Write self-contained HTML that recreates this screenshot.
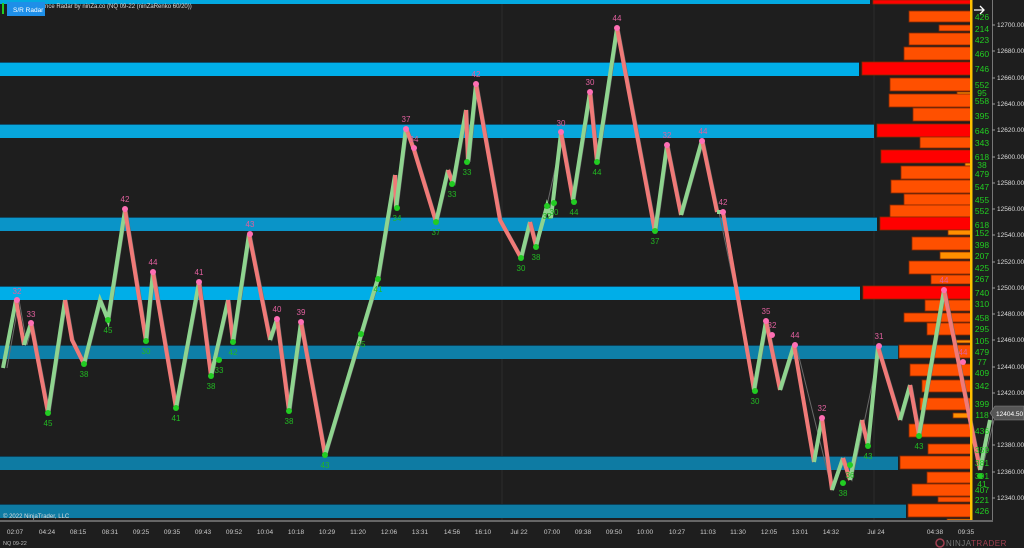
<!DOCTYPE html>
<html><head><meta charset="utf-8"><style>
html,body{margin:0;padding:0;background:#1e1e1e;width:1024px;height:548px;overflow:hidden;font-family:"Liberation Sans",sans-serif}
svg text{font-family:"Liberation Sans",sans-serif}
</style></head><body>
<svg width="1024" height="548" xmlns="http://www.w3.org/2000/svg">
<rect width="1024" height="548" fill="#1e1e1e"/>
<line x1="502" y1="0" x2="502" y2="520" stroke="#2c2c2c"/>
<line x1="874" y1="0" x2="874" y2="520" stroke="#2c2c2c"/>
<g>
<rect x="0" y="0" width="870" height="4" fill="#03a9e0"/>
<rect x="0" y="62" width="859" height="14" fill="#00aee8"/><rect x="0" y="62" width="859" height="1" fill="#0c5070"/>
<rect x="0" y="124" width="874" height="14" fill="#07a6dc"/><rect x="0" y="124" width="874" height="1" fill="#0c5070"/>
<rect x="0" y="217" width="877" height="14" fill="#0a94c8"/><rect x="0" y="217" width="877" height="1" fill="#0c4a66"/>
<rect x="0" y="286" width="860" height="14" fill="#00aee8"/><rect x="0" y="286" width="860" height="1" fill="#0c5070"/>
<rect x="0" y="345" width="898" height="14" fill="#0e7fa8"/><rect x="0" y="345" width="898" height="1" fill="#0c4058"/>
<rect x="0" y="456" width="898" height="14" fill="#0e7ba3"/><rect x="0" y="456" width="898" height="1" fill="#0c4058"/>
<rect x="0" y="504" width="906" height="14" fill="#0e7ba3"/><rect x="0" y="504" width="906" height="1" fill="#0c4058"/>
</g>
<g fill="#ff5000" stroke="#8a2a00" stroke-width="0.8">
<rect x="873" y="0" width="98" height="4" fill="#ff0000"/>
<rect x="909" y="11" width="62" height="11"/>
<rect x="939" y="25" width="32" height="6"/>
<rect x="909" y="33" width="62" height="12"/>
<rect x="904" y="47" width="67" height="13"/>
<rect x="862" y="62" width="109" height="13" fill="#ff0000"/>
<rect x="890" y="78" width="81" height="13"/>
<rect x="957" y="92" width="14" height="3" fill="#ff9000"/>
<rect x="889" y="94" width="82" height="13"/>
<rect x="913" y="108" width="58" height="13"/>
<rect x="877" y="124" width="94" height="13" fill="#ff0000"/>
<rect x="920" y="137" width="51" height="11"/>
<rect x="881" y="150" width="90" height="13" fill="#ff0000"/>
<rect x="965" y="163" width="6" height="3" fill="#ff9000"/>
<rect x="901" y="166" width="70" height="13"/>
<rect x="891" y="180" width="80" height="13"/>
<rect x="904" y="194" width="67" height="11"/>
<rect x="890" y="205" width="81" height="12"/>
<rect x="880" y="217" width="91" height="13" fill="#ff0000"/>
<rect x="948" y="230" width="23" height="5" fill="#ff9000"/>
<rect x="912" y="237" width="59" height="13"/>
<rect x="940" y="252" width="31" height="7" fill="#ff9000"/>
<rect x="909" y="261" width="62" height="13"/>
<rect x="931" y="275" width="40" height="9"/>
<rect x="863" y="286" width="108" height="13" fill="#ff0000"/>
<rect x="925" y="300" width="46" height="11"/>
<rect x="904" y="313" width="67" height="9"/>
<rect x="927" y="323" width="44" height="12"/>
<rect x="955" y="340" width="16" height="3" fill="#ff9000"/>
<rect x="899" y="345" width="72" height="13"/>
<rect x="910" y="364" width="61" height="12"/>
<rect x="922" y="380" width="49" height="12"/>
<rect x="920" y="398" width="51" height="12"/>
<rect x="953" y="413" width="18" height="5" fill="#ff9000"/>
<rect x="909" y="424" width="62" height="13"/>
<rect x="928" y="444" width="43" height="10"/>
<rect x="900" y="456" width="71" height="13"/>
<rect x="927" y="472" width="44" height="11"/>
<rect x="912" y="484" width="59" height="12"/>
<rect x="938" y="497" width="33" height="5"/>
<rect x="908" y="504" width="63" height="13"/>
<rect x="947" y="519" width="24" height="2" fill="#ff9000"/>
</g>
<g fill="none" stroke-width="4" stroke-linejoin="miter">
<polyline stroke="#6a6a6a" stroke-width="1" points="7,368 19,300 27,345 33,323 50,413 67,300 74,340 86,364 102,300 110,320 127,210 148,341 155,272 178,408 201,282 213,376 230,300 235,342 251,234 272,340 279,319 291,411 303,322 327,455 380,278 397,175 398,208 408,128 416,150 438,222 450,170 455,184 468,110 470,162 478,84 502,220 523,258 532,222 538,246 563,133 575,200 592,92 599,162 619,28 657,232 669,145 683,215 704,140 756,390 768,321 782,390 796,345 832,490 845,458 852,480 880,347 902,420 912,385 921,435 946,290 982,470 994,420"/>
<polyline stroke="#8fd48f" points="3,368 16,300"/>
<polyline stroke="#f07a78" points="16,300 24,345"/>
<polyline stroke="#8fd48f" points="24,345 31,323"/>
<polyline stroke="#f07a78" points="31,323 48,413"/>
<polyline stroke="#8fd48f" points="48,413 65,300"/>
<polyline stroke="#f07a78" points="65,300 72,340 84,364"/>
<polyline stroke="#8fd48f" points="84,364 100,300 108,320 125,210"/>
<polyline stroke="#f07a78" points="125,210 146,341"/>
<polyline stroke="#8fd48f" points="146,341 153,272"/>
<polyline stroke="#f07a78" points="153,272 176,408"/>
<polyline stroke="#8fd48f" points="176,408 199,282"/>
<polyline stroke="#f07a78" points="199,282 211,376"/>
<polyline stroke="#8fd48f" points="211,376 228,300"/>
<polyline stroke="#f07a78" points="228,300 233,342"/>
<polyline stroke="#8fd48f" points="233,342 249,234"/>
<polyline stroke="#f07a78" points="249,234 270,340"/>
<polyline stroke="#8fd48f" points="270,340 277,319"/>
<polyline stroke="#f07a78" points="277,319 289,411"/>
<polyline stroke="#8fd48f" points="289,411 301,322"/>
<polyline stroke="#f07a78" points="301,322 325,455"/>
<polyline stroke="#8fd48f" points="325,455 378,278 395,175"/>
<polyline stroke="#f07a78" points="395,175 396,208"/>
<polyline stroke="#8fd48f" points="396,208 406,128"/>
<polyline stroke="#f07a78" points="406,128 414,150 436,222"/>
<polyline stroke="#8fd48f" points="436,222 448,170"/>
<polyline stroke="#f07a78" points="448,170 453,184"/>
<polyline stroke="#8fd48f" points="453,184 466,110"/>
<polyline stroke="#f07a78" points="466,110 468,162"/>
<polyline stroke="#8fd48f" points="468,162 476,84"/>
<polyline stroke="#f07a78" points="476,84 500,220 521,258"/>
<polyline stroke="#8fd48f" points="521,258 530,222"/>
<polyline stroke="#f07a78" points="530,222 536,246"/>
<polyline stroke="#8fd48f" points="536,246 547,206 551,218 561,133"/>
<polyline stroke="#f07a78" points="561,133 573,200"/>
<polyline stroke="#8fd48f" points="573,200 590,92"/>
<polyline stroke="#f07a78" points="590,92 597,162"/>
<polyline stroke="#8fd48f" points="597,162 617,28"/>
<polyline stroke="#f07a78" points="617,28 655,232"/>
<polyline stroke="#8fd48f" points="655,232 667,145"/>
<polyline stroke="#f07a78" points="667,145 681,215"/>
<polyline stroke="#8fd48f" points="681,215 702,140"/>
<polyline stroke="#f07a78" points="702,140 717,212"/>
<polyline stroke="#8fd48f" points="717,212 723,212"/>
<polyline stroke="#f07a78" points="723,212 754,390"/>
<polyline stroke="#8fd48f" points="754,390 766,321"/>
<polyline stroke="#f07a78" points="766,321 780,390"/>
<polyline stroke="#8fd48f" points="780,390 794,345"/>
<polyline stroke="#f07a78" points="794,345 814,462"/>
<polyline stroke="#8fd48f" points="814,462 822,418"/>
<polyline stroke="#f07a78" points="822,418 832,490"/>
<polyline stroke="#8fd48f" points="832,490 843,458"/>
<polyline stroke="#f07a78" points="843,458 850,480"/>
<polyline stroke="#8fd48f" points="850,480 862,420"/>
<polyline stroke="#f07a78" points="862,420 868,446"/>
<polyline stroke="#8fd48f" points="868,446 878,347"/>
<polyline stroke="#f07a78" points="878,347 900,420"/>
<polyline stroke="#8fd48f" points="900,420 910,385"/>
<polyline stroke="#f07a78" points="910,385 919,435"/>
<polyline stroke="#8fd48f" points="919,435 944,290"/>
<polyline stroke="#f07a78" points="944,290 980,470"/>
<polyline stroke="#8fd48f" points="980,470 990,420"/>
</g>
<g font-size="8" text-anchor="middle">
<g fill="#ff6fb4">
<circle cx="17" cy="300" r="3"/><circle cx="31" cy="323" r="3"/><circle cx="125" cy="209" r="3"/><circle cx="153" cy="272" r="3"/><circle cx="199" cy="282" r="3"/><circle cx="250" cy="234" r="3"/><circle cx="277" cy="319" r="3"/><circle cx="301" cy="322" r="3"/><circle cx="406" cy="129" r="3"/><circle cx="414" cy="148" r="3"/><circle cx="476" cy="84" r="3"/><circle cx="561" cy="132" r="3"/><circle cx="590" cy="92" r="3"/><circle cx="617" cy="28" r="3"/><circle cx="667" cy="145" r="3"/><circle cx="702" cy="141" r="3"/><circle cx="723" cy="212" r="3"/><circle cx="766" cy="321" r="3"/><circle cx="772" cy="335" r="3"/><circle cx="795" cy="345" r="3"/><circle cx="822" cy="418" r="3"/><circle cx="879" cy="346" r="3"/><circle cx="944" cy="290" r="3"/><circle cx="963" cy="362" r="3"/>
</g>
<g fill="#e0609e">
<text x="17" y="294">32</text><text x="31" y="317">33</text><text x="125" y="202">42</text><text x="153" y="265">44</text><text x="199" y="275">41</text><text x="250" y="227">43</text><text x="277" y="312">40</text><text x="301" y="315">39</text><text x="406" y="122">37</text><text x="414" y="142">34</text><text x="476" y="77">42</text><text x="561" y="126">30</text><text x="590" y="85">30</text><text x="617" y="21">44</text><text x="667" y="138">32</text><text x="703" y="134">44</text><text x="723" y="205">42</text><text x="766" y="314">35</text><text x="772" y="328">32</text><text x="795" y="338">44</text><text x="822" y="411">32</text><text x="879" y="339">31</text><text x="944" y="283">44</text><text x="963" y="355">44</text>
</g>
<g fill="#22cc22">
<circle cx="48" cy="413" r="3"/><circle cx="84" cy="364" r="3"/><circle cx="108" cy="320" r="3"/><circle cx="146" cy="341" r="3"/><circle cx="176" cy="408" r="3"/><circle cx="211" cy="376" r="3"/><circle cx="219" cy="360" r="3"/><circle cx="233" cy="342" r="3"/><circle cx="289" cy="411" r="3"/><circle cx="325" cy="455" r="3"/><circle cx="361" cy="334" r="3"/><circle cx="378" cy="279" r="3"/><circle cx="397" cy="208" r="3"/><circle cx="436" cy="222" r="3"/><circle cx="452" cy="184" r="3"/><circle cx="467" cy="162" r="3"/><circle cx="521" cy="258" r="3"/><circle cx="536" cy="247" r="3"/><circle cx="547" cy="206" r="3"/><circle cx="554" cy="203" r="3"/><circle cx="574" cy="202" r="3"/><circle cx="597" cy="162" r="3"/><circle cx="655" cy="231" r="3"/><circle cx="755" cy="391" r="3"/><circle cx="843" cy="483" r="3"/><circle cx="850" cy="465" r="3"/><circle cx="868" cy="446" r="3"/><circle cx="919" cy="436" r="3"/><circle cx="980" cy="476" r="3"/>
</g>
<g fill="#22b822">
<text x="48" y="426">45</text><text x="84" y="377">38</text><text x="108" y="333">45</text><text x="146" y="354">30</text><text x="176" y="421">41</text><text x="211" y="389">38</text><text x="219" y="373">33</text><text x="233" y="355">42</text><text x="289" y="424">38</text><text x="325" y="468">43</text><text x="361" y="347">45</text><text x="378" y="292">41</text><text x="397" y="221">34</text><text x="436" y="235">37</text><text x="452" y="197">33</text><text x="467" y="175">33</text><text x="521" y="271">30</text><text x="536" y="260">38</text><text x="547" y="219">32</text><text x="554" y="215">30</text><text x="574" y="215">44</text><text x="597" y="175">44</text><text x="655" y="244">37</text><text x="755" y="404">30</text><text x="843" y="496">38</text><text x="850" y="478">36</text><text x="868" y="459">43</text><text x="919" y="449">43</text>
</g>
</g>
<rect x="970" y="0" width="2.5" height="521" fill="#ffc000"/>
<g fill="#22cc22" font-size="8.5" text-anchor="middle">
<text x="982" y="20">426</text><text x="982" y="32">214</text><text x="982" y="43">423</text><text x="982" y="57">460</text><text x="982" y="72">746</text><text x="982" y="88">552</text><text x="982" y="96">95</text><text x="982" y="104">558</text><text x="982" y="119">395</text><text x="982" y="134">646</text><text x="982" y="146">343</text><text x="982" y="160">618</text><text x="982" y="168">38</text><text x="982" y="177">479</text><text x="982" y="190">547</text><text x="982" y="203">455</text><text x="982" y="214">552</text><text x="982" y="228">618</text><text x="982" y="236">152</text><text x="982" y="248">398</text><text x="982" y="259">207</text><text x="982" y="271">425</text><text x="982" y="282">267</text><text x="982" y="296">740</text><text x="982" y="307">310</text><text x="982" y="321">458</text><text x="982" y="332">295</text><text x="982" y="344">105</text><text x="982" y="355">479</text><text x="982" y="365">77</text><text x="982" y="376">409</text><text x="982" y="389">342</text><text x="982" y="407">399</text><text x="982" y="418">118</text><text x="982" y="434">436</text><text x="982" y="453">359</text><text x="982" y="466">381</text><text x="982" y="479">391</text><text x="982" y="487">41</text><text x="982" y="493">407</text><text x="982" y="503">221</text><text x="982" y="514">426</text>
</g>
<path d="M974 10 h10 M980 6 l4 4 -4 4" stroke="#fff" stroke-width="1.3" fill="none"/>
<line x1="992.5" y1="0" x2="992.5" y2="521" stroke="#777"/>
<g fill="#ddd" font-size="6.5">
<text x="997" y="27">12700.00</text><text x="997" y="53">12680.00</text><text x="997" y="80">12660.00</text><text x="997" y="106">12640.00</text><text x="997" y="132">12620.00</text><text x="997" y="159">12600.00</text><text x="997" y="185">12580.00</text><text x="997" y="211">12560.00</text><text x="997" y="237">12540.00</text><text x="997" y="264">12520.00</text><text x="997" y="290">12500.00</text><text x="997" y="316">12480.00</text><text x="997" y="342">12460.00</text><text x="997" y="369">12440.00</text><text x="997" y="395">12420.00</text><text x="997" y="447">12380.00</text><text x="997" y="474">12360.00</text><text x="997" y="500">12340.00</text>
</g>
<g stroke="#999"><line x1="992" y1="25" x2="995" y2="25"/><line x1="992" y1="51" x2="995" y2="51"/><line x1="992" y1="78" x2="995" y2="78"/><line x1="992" y1="104" x2="995" y2="104"/><line x1="992" y1="130" x2="995" y2="130"/><line x1="992" y1="157" x2="995" y2="157"/><line x1="992" y1="183" x2="995" y2="183"/><line x1="992" y1="209" x2="995" y2="209"/><line x1="992" y1="235" x2="995" y2="235"/><line x1="992" y1="262" x2="995" y2="262"/><line x1="992" y1="288" x2="995" y2="288"/><line x1="992" y1="314" x2="995" y2="314"/><line x1="992" y1="340" x2="995" y2="340"/><line x1="992" y1="367" x2="995" y2="367"/><line x1="992" y1="393" x2="995" y2="393"/><line x1="992" y1="445" x2="995" y2="445"/><line x1="992" y1="472" x2="995" y2="472"/><line x1="992" y1="498" x2="995" y2="498"/></g>
<path d="M990 413 L995 406 H1024 V420 H995 Z" fill="#555" stroke="#888" stroke-width="0.6"/>
<text x="996" y="416" fill="#fff" font-size="6.5">12404.50</text>
<rect x="0" y="520" width="993" height="2" fill="#666"/>
<g fill="#ccc" font-size="6.5" text-anchor="middle">
<text x="15" y="534">02:07</text><text x="47" y="534">04:24</text><text x="78" y="534">08:15</text><text x="110" y="534">08:31</text><text x="141" y="534">09:25</text><text x="172" y="534">09:35</text><text x="203" y="534">09:43</text><text x="234" y="534">09:52</text><text x="265" y="534">10:04</text><text x="296" y="534">10:18</text><text x="327" y="534">10:29</text><text x="358" y="534">11:20</text><text x="389" y="534">12:06</text><text x="420" y="534">13:31</text><text x="452" y="534">14:56</text><text x="483" y="534">16:10</text><text x="519" y="534">Jul 22</text><text x="552" y="534">07:00</text><text x="583" y="534">09:38</text><text x="614" y="534">09:50</text><text x="645" y="534">10:00</text><text x="677" y="534">10:27</text><text x="708" y="534">11:03</text><text x="738" y="534">11:30</text><text x="769" y="534">12:05</text><text x="800" y="534">13:01</text><text x="831" y="534">14:32</text><text x="876" y="534">Jul 24</text><text x="935" y="534">04:38</text><text x="966" y="534">09:35</text>
</g>
<text x="3" y="545" fill="#bbb" font-size="5.5">NQ 09-22</text>
<text x="3" y="518" fill="#ddd" font-size="6">© 2022 NinjaTrader, LLC</text>
<circle cx="940" cy="543" r="4" fill="none" stroke="#a04050" stroke-width="1.5"/>
<text x="946" y="546" font-size="8" fill="#777" letter-spacing="0.5">NINJA<tspan fill="#a04050">TRADER</tspan></text>
<rect x="2" y="3" width="2" height="11" fill="#22cc22"/>
<rect x="7" y="2" width="38" height="14" fill="#1e8fe8"/>
<text x="13" y="12" fill="#fff" font-size="6.5">S/R Radar</text>
<text x="45" y="8" fill="#ddd" font-size="6">nce Radar by ninZa.co (NQ 09-22 (ninZaRenko 60/20))</text>
</svg>
</body></html>
